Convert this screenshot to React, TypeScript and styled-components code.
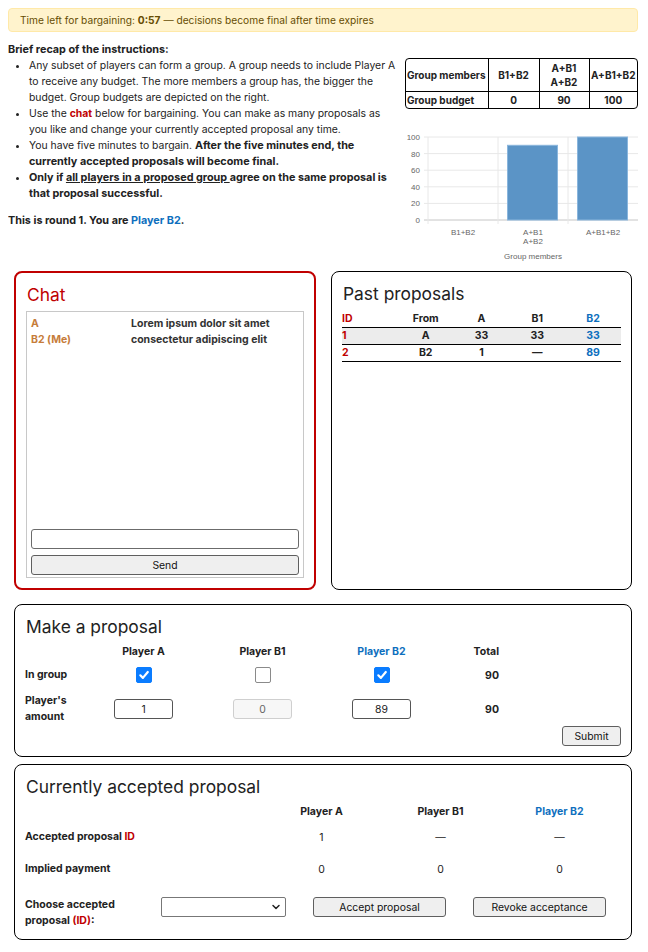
import React from 'react';
import styled, { createGlobalStyle } from 'styled-components';
import { ChevronDown } from 'lucide-react';

const RED = '#c00000';
const BLUE = '#0e6fbe';
const ORANGE = '#c67c3a';

const GlobalStyle = createGlobalStyle`
  * { box-sizing: border-box; }
  body {
    margin: 8px;
    font-family: Inter, "Liberation Sans", "DejaVu Sans", sans-serif;
    font-size: 10.4px;
    color: #222;
    background: #fff;
  }
`;

const Page = styled.div`
  width: 630px;
`;

const TimerBanner = styled.div`
  height: 24px;
  padding: 0 11px;
  display: flex;
  align-items: center;
  background: #fff3cd;
  border: 1px solid #ffe9a8;
  border-radius: 4px;
  color: #664d03;
  font-size: 10.2px;
`;

const Top = styled.div`
  display: flex;
  justify-content: space-between;
  margin-top: 10px;
`;

const Recap = styled.div`
  width: 390px;
  line-height: 16px;
`;

const Bold = styled.span`
  font-weight: 700;
`;

const RecapBold = styled.span`
  font-weight: 700;
  font-size: 10.8px;
`;

const RecapList = styled.ul`
  margin: 0;
  padding-left: 21px;
`;

const Red = styled.span`
  color: ${RED};
  font-weight: 700;
`;

const Blue = styled.span`
  color: ${BLUE};
  font-weight: 700;
`;

const Underline = styled.span`
  text-decoration: underline;
`;

const RoundLine = styled.div`
  margin-top: 11px;
  font-weight: 700;
  font-size: 10.8px;
`;

const RightCol = styled.div`
  width: 238px;
`;

const BudgetWrap = styled.div`
  margin: 16px 0 0 5px;
  border: 1px solid #000;
  border-radius: 4px;
  overflow: hidden;
`;

const BudgetTable = styled.table`
  width: 100%;
  border-collapse: collapse;
  font-size: 10px;
  font-weight: 700;
  table-layout: fixed;
`;

const BudgetCell = styled.td<{ $first?: boolean; $w?: number }>`
  width: ${(p) => (p.$w ? `${p.$w}px` : 'auto')};
  border-right: 1px solid #000;
  border-bottom: 1px solid #000;
  padding: 2px 1px;
  line-height: 14px;
  white-space: nowrap;
  text-align: ${(p) => (p.$first ? 'left' : 'center')};
  &:last-child { border-right: none; }
  tr:last-child & { border-bottom: none; padding: 1px 1px; }
`;

const ChartSvg = styled.svg`
  display: block;
  margin-top: 19px;
  font-family: "Liberation Sans", Arial, sans-serif;
`;

const PanelRow = styled.div`
  display: grid;
  grid-template-columns: 302px 301px;
  column-gap: 15px;
  margin: 7px 6px 0;
  height: 319px;
`;

const Panel = styled.section<{ $chat?: boolean }>`
  border: ${(p) => (p.$chat ? `2px solid ${RED}` : '1px solid #000')};
  border-radius: 8px;
  padding: 10px;
  display: flex;
  flex-direction: column;
`;

const WidePanel = styled(Panel)<{ $gap: number }>`
  margin: ${(p) => p.$gap}px 6px 0;
`;

const PanelTitle = styled.h2<{ $red?: boolean; $after?: number }>`
  margin: 1px 0 ${(p) => p.$after ?? 5}px 1px;
  font-size: 17.4px;
  line-height: 22px;
  font-weight: 400;
  color: ${(p) => (p.$red ? RED : '#222')};
`;

const ChatBox = styled.div`
  flex: 1;
  border: 1px solid #c8c8c8;
  display: flex;
  flex-direction: column;
  padding: 4px 4px 2px;
`;

const Messages = styled.div`
  flex: 1;
`;

const MessageRow = styled.div`
  display: grid;
  grid-template-columns: 100px 1fr;
  font-size: 10.5px;
  font-weight: 700;
  line-height: 16px;
`;

const Sender = styled.span`
  color: ${ORANGE};
`;

const MessageText = styled.span`
  color: #333;
`;

const ChatInput = styled.input`
  height: 20px;
  width: 100%;
  border: 1px solid #6b6b6b;
  border-radius: 3px;
  margin-bottom: 6px;
`;

const NativeButton = styled.button<{ $w?: number; $full?: boolean }>`
  height: 20px;
  width: ${(p) => (p.$full ? '100%' : p.$w ? `${p.$w}px` : 'auto')};
  padding: 0 6px;
  background: #efefef;
  border: 1px solid #5f5f5f;
  border-radius: 3px;
  font-family: Inter, "Liberation Sans", sans-serif;
  font-size: 10.4px;
  color: #111;
`;

const PastTable = styled.table`
  width: 279px;
  border-collapse: collapse;
  font-size: 10.5px;
  font-weight: 700;
  table-layout: fixed;
`;

const PastCell = styled.td<{ $color?: string; $left?: boolean }>`
  height: 17px;
  padding: 0;
  border-bottom: 1px solid #000;
  text-align: ${(p) => (p.$left ? 'left' : 'center')};
  color: ${(p) => p.$color ?? '#222'};
`;

const PastRow = styled.tr<{ $shade?: boolean }>`
  background: ${(p) => (p.$shade ? '#ececec' : 'transparent')};
`;

const ProposalGrid = styled.div`
  display: grid;
  grid-template-columns: 59px 119px 119px 119px 58px;
  grid-template-rows: 16px 30px 38px;
  align-items: center;
  font-size: 10.5px;
`;

const GridHead = styled.div<{ $color?: string; $align?: string }>`
  font-weight: 700;
  color: ${(p) => p.$color ?? '#222'};
  text-align: ${(p) => p.$align ?? 'center'};
  line-height: 16px;
`;

const RowLabel = styled.div`
  font-weight: 700;
  line-height: 16px;
`;

const Cell = styled.div<{ $align?: string; $bold?: boolean }>`
  display: flex;
  justify-content: ${(p) => p.$align ?? 'center'};
  font-weight: ${(p) => (p.$bold ? 700 : 400)};
`;

const CheckBox = styled.span<{ $on?: boolean }>`
  width: 16px;
  height: 16px;
  border-radius: 2px;
  display: inline-flex;
  align-items: center;
  justify-content: center;
  background: ${(p) => (p.$on ? '#0a7cff' : '#fff')};
  border: 1px solid ${(p) => (p.$on ? '#0a7cff' : '#8a8a8a')};
`;

const AmountInput = styled.input`
  width: 59px;
  height: 20px;
  border: 1px solid #555;
  border-radius: 3px;
  text-align: center;
  font-family: Inter, "Liberation Sans", sans-serif;
  font-size: 10.4px;
  color: #222;
  &:disabled {
    background: #f7f7f7;
    border-color: #cfcfcf;
    color: #666;
  }
`;

const SubmitRow = styled.div`
  display: flex;
  justify-content: flex-end;
  margin-top: -2px;
`;

const AcceptedGrid = styled.div`
  display: grid;
  grid-template-columns: 237px 119px 119px 119px;
  grid-template-rows: 16px 34px 30px;
  align-items: center;
  font-size: 10.5px;
`;

const ChooseRow = styled.div`
  display: flex;
  align-items: flex-start;
  margin-top: 13px;
  font-size: 10.5px;
`;

const ChooseLabel = styled.div`
  width: 100px;
  margin-right: 36px;
  font-weight: 700;
  line-height: 16px;
`;

const SelectWrap = styled.div`
  position: relative;
  width: 125px;
  height: 20px;
  margin-right: 27px;
`;

const Select = styled.select`
  appearance: none;
  width: 100%;
  height: 100%;
  border: 1px solid #777;
  border-radius: 2px;
  background: #fff;
`;

const SelectArrow = styled.span`
  position: absolute;
  right: 4px;
  top: 4px;
  display: flex;
  pointer-events: none;
`;

const ButtonGap = styled.div`
  width: 27px;
`;

const Tick = () => (
  <svg width="12" height="12" viewBox="0 0 12 12">
    <path d="M2.3 6.3 L4.9 8.9 L9.8 3" fill="none" stroke="#fff" strokeWidth="2.2" strokeLinecap="round" strokeLinejoin="round" />
  </svg>
);

const BudgetChart = () => {
  const x0 = 28;
  const y0 = 92;
  const scale = 0.83;
  const ticks = [0, 20, 40, 60, 80, 100];
  const cats = [
    { label: ['B1+B2'], v: 0 },
    { label: ['A+B1', 'A+B2'], v: 90 },
    { label: ['A+B1+B2'], v: 100 },
  ];
  return (
    <ChartSvg width={238} height={136}>
      {ticks.map((t) => {
        const y = y0 - t * scale;
        return (
          <g key={t}>
            <line x1={x0 - 4} x2={238} y1={y} y2={y} stroke={t === 0 ? '#c6c6c6' : '#e8e8e8'} />
            <text x={20} y={y + 3} textAnchor="end" fontSize="8" fill="#666">{t}</text>
          </g>
        );
      })}
      {[0, 1, 2].map((i) => (
        <line key={i} x1={x0 + i * 70} x2={x0 + i * 70} y1={y0 - 100 * scale} y2={y0 + 4} stroke="#e8e8e8" />
      ))}
      {cats.map((c, i) => (
        <g key={i}>
          {c.v > 0 && (
            <rect
              x={x0 + i * 70 + 9.5}
              y={y0 - c.v * scale}
              width={50}
              height={c.v * scale}
              fill="#5b94c6"
              stroke="#8ab6dd"
            />
          )}
          {c.label.map((l, j) => (
            <text key={l} x={x0 + i * 70 + 35} y={107 + j * 9} textAnchor="middle" fontSize="8" fill="#666">
              {l}
            </text>
          ))}
        </g>
      ))}
      <text x={x0 + 105} y={131} textAnchor="middle" fontSize="8" fill="#666">Group members</text>
    </ChartSvg>
  );
};

const pastProposals = [
  { id: 1, from: 'A', a: '33', b1: '33', b2: '33' },
  { id: 2, from: 'B2', a: '1', b1: '—', b2: '89' },
];

const App = () => {
  return (
    <Page>
      <GlobalStyle />
      <TimerBanner>
        Time left for bargaining:&nbsp;<Bold>0:57</Bold>&nbsp;— decisions become final after time expires
      </TimerBanner>

      <Top>
        <Recap>
          <RecapBold>Brief recap of the instructions:</RecapBold>
          <RecapList>
            <li>
              Any subset of players can form a group. A group needs to include Player A to receive any budget.
              The more members a group has, the bigger the budget. Group budgets are depicted on the right.
            </li>
            <li>
              Use the <Red>chat</Red> below for bargaining. You can make as many proposals as you like and
              change your currently accepted proposal any time.
            </li>
            <li>
              You have five minutes to bargain.{' '}
              <RecapBold>After the five minutes end, the currently accepted proposals will become final.</RecapBold>
            </li>
            <li>
              <RecapBold>
                Only if <Underline>all players in a proposed group </Underline>agree on the same proposal is
                that proposal successful.
              </RecapBold>
            </li>
          </RecapList>
          <RoundLine>
            This is round 1. You are <Blue>Player B2</Blue>.
          </RoundLine>
        </Recap>

        <RightCol>
          <BudgetWrap>
            <BudgetTable>
              <tbody>
                <tr>
                  <BudgetCell $first $w={82}>Group members</BudgetCell>
                  <BudgetCell $w={51}>B1+B2</BudgetCell>
                  <BudgetCell $w={50}>A+B1<br />A+B2</BudgetCell>
                  <BudgetCell>A+B1+B2</BudgetCell>
                </tr>
                <tr>
                  <BudgetCell $first>Group budget</BudgetCell>
                  <BudgetCell>0</BudgetCell>
                  <BudgetCell>90</BudgetCell>
                  <BudgetCell>100</BudgetCell>
                </tr>
              </tbody>
            </BudgetTable>
          </BudgetWrap>
          <BudgetChart />
        </RightCol>
      </Top>

      <PanelRow>
        <Panel $chat>
          <PanelTitle $red>Chat</PanelTitle>
          <ChatBox>
            <Messages>
              <MessageRow>
                <Sender>A</Sender>
                <MessageText>Lorem ipsum dolor sit amet</MessageText>
              </MessageRow>
              <MessageRow>
                <Sender>B2 (Me)</Sender>
                <MessageText>consectetur adipiscing elit</MessageText>
              </MessageRow>
            </Messages>
            <ChatInput type="text" />
            <NativeButton $full>Send</NativeButton>
          </ChatBox>
        </Panel>

        <Panel>
          <PanelTitle>Past proposals</PanelTitle>
          <PastTable>
            <thead>
              <tr>
                <PastCell as="th" $left $color={RED}>ID</PastCell>
                <PastCell as="th">From</PastCell>
                <PastCell as="th">A</PastCell>
                <PastCell as="th">B1</PastCell>
                <PastCell as="th" $color={BLUE}>B2</PastCell>
              </tr>
            </thead>
            <tbody>
              {pastProposals.map((p) => (
                <PastRow key={p.id} $shade={p.id === 1}>
                  <PastCell $left $color={RED}>{p.id}</PastCell>
                  <PastCell>{p.from}</PastCell>
                  <PastCell>{p.a}</PastCell>
                  <PastCell>{p.b1}</PastCell>
                  <PastCell $color={BLUE}>{p.b2}</PastCell>
                </PastRow>
              ))}
            </tbody>
          </PastTable>
        </Panel>
      </PanelRow>

      <WidePanel $gap={14}>
        <PanelTitle $after={6}>Make a proposal</PanelTitle>
        <ProposalGrid>
          <div />
          <GridHead>Player A</GridHead>
          <GridHead>Player B1</GridHead>
          <GridHead $color={BLUE}>Player B2</GridHead>
          <GridHead $align="right">Total</GridHead>

          <RowLabel>In group</RowLabel>
          <Cell><CheckBox $on><Tick /></CheckBox></Cell>
          <Cell><CheckBox /></Cell>
          <Cell><CheckBox $on><Tick /></CheckBox></Cell>
          <Cell $align="flex-end" $bold>90</Cell>

          <RowLabel>Player's amount</RowLabel>
          <Cell><AmountInput defaultValue="1" /></Cell>
          <Cell><AmountInput defaultValue="0" disabled /></Cell>
          <Cell><AmountInput defaultValue="89" /></Cell>
          <Cell $align="flex-end" $bold>90</Cell>
        </ProposalGrid>
        <SubmitRow>
          <NativeButton $w={59}>Submit</NativeButton>
        </SubmitRow>
      </WidePanel>

      <WidePanel $gap={7}>
        <PanelTitle $after={6}>Currently accepted proposal</PanelTitle>
        <AcceptedGrid>
          <div />
          <GridHead>Player A</GridHead>
          <GridHead>Player B1</GridHead>
          <GridHead $color={BLUE}>Player B2</GridHead>

          <RowLabel>Accepted proposal <Red>ID</Red></RowLabel>
          <Cell>1</Cell>
          <Cell>—</Cell>
          <Cell>—</Cell>

          <RowLabel>Implied payment</RowLabel>
          <Cell>0</Cell>
          <Cell>0</Cell>
          <Cell>0</Cell>
        </AcceptedGrid>
        <ChooseRow>
          <ChooseLabel>Choose accepted proposal <Red>(ID)</Red>:</ChooseLabel>
          <SelectWrap>
            <Select defaultValue="">
              <option value="" />
              <option value="1">1</option>
              <option value="2">2</option>
            </Select>
            <SelectArrow><ChevronDown size={12} strokeWidth={3} color="#222" /></SelectArrow>
          </SelectWrap>
          <NativeButton $w={133}>Accept proposal</NativeButton>
          <ButtonGap />
          <NativeButton $w={133}>Revoke acceptance</NativeButton>
        </ChooseRow>
      </WidePanel>
    </Page>
  );
};

export default App;
